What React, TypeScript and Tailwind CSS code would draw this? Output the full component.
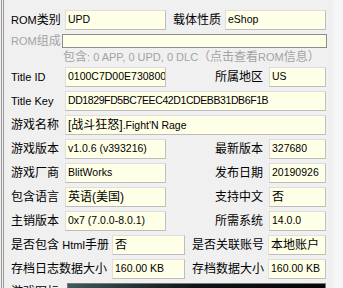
import type { ReactNode } from 'react';

const font = "font-['Liberation_Sans','Noto_Sans_CJK_SC',sans-serif]";

function Field({ value, className = '' }: { value?: ReactNode; className?: string }) {
  return (
    <div
      className={`h-5 shrink-0 flex items-center pl-[2px] bg-[#ffffe7] border border-[#dedede] border-r-[#bdbdbd] border-b-[#bdbdbd] text-[10.5px] text-black whitespace-nowrap overflow-hidden ${className}`}
    >
      {value}
    </div>
  );
}

function Label({ children, className = 'text-black' }: { children: ReactNode; className?: string }) {
  return <div className={`shrink-0 text-[12px] whitespace-nowrap ${className}`}>{children}</div>;
}

const L = ({ children }: { children: ReactNode }) => <span className="text-[11px]">{children}</span>;

function PairRow({ l1, v1, l2, v2 }: { l1: ReactNode; v1: ReactNode; l2: ReactNode; v2: ReactNode }) {
  return (
    <div className="flex items-center h-5">
      <Label className="w-[54px] text-black">{l1}</Label>
      <Field value={v1} className="w-[101px]" />
      <Label className="w-[54px] ml-[49px] text-black">{l2}</Label>
      <Field value={v2} className="w-[57px]" />
    </div>
  );
}

function WideRow({ label, value }: { label: ReactNode; value: ReactNode }) {
  return (
    <div className="flex items-center h-5">
      <Label className="w-[54px] text-black">{label}</Label>
      <Field value={value} className="w-[261px]" />
    </div>
  );
}

function SmallRow({ l1, v1, l2, v2 }: { l1: ReactNode; v1: ReactNode; l2: ReactNode; v2: ReactNode }) {
  return (
    <div className="flex items-center h-5">
      <Label className="w-[101px] text-black">{l1}</Label>
      <Field value={v1} className="w-[73px]" />
      <Label className="w-[76px] ml-[7px] text-black">{l2}</Label>
      <Field value={v2} className="w-[58px]" />
    </div>
  );
}

export default function App() {
  return (
    <div className={`w-[343px] h-[288px] overflow-hidden flex bg-[#f0f0f0] ${font}`}>
      <div className="ml-[1px] border-l-[3px] border-double border-[#9a9a9a] flex-1 pl-[7px] pt-[10px] flex flex-col">
        <div className="flex items-center h-5">
          <Label className="w-[54px] text-black"><L>ROM</L>类别</Label>
          <Field value="UPD" className="w-[101px]" />
          <Label className="w-[52px] ml-[7px] text-black">载体性质</Label>
          <Field value="eShop" className="w-[101px]" />
        </div>

        <div className="flex items-center h-[14px] mt-1">
          <Label className="w-[51px] text-[#a3a3a3]"><L>ROM</L>组成</Label>
          <div className="w-[265px] h-[14px] bg-[#ffffe7] border border-[#8c8c8c]" />
        </div>
        <div className="h-4 mt-[1px] pl-[52px] flex items-center text-[12px] text-[#a3a3a3] whitespace-nowrap">
          包含<L>: 0 APP, 0 UPD, 0 DLC</L>（点击查看<L>ROM</L>信息）
        </div>

        <div className="flex flex-col gap-1 mt-[2px]">
          <PairRow l1={<L>Title ID</L>} v1="0100C7D00E730800" l2="所属地区" v2="US" />
          <WideRow label={<L>Title Key</L>} value={<span className="tracking-[-0.4px]">DD1829FD5BC7EEC42D1CDEBB31DB6F1B</span>} />
          <WideRow label="游戏名称" value={<span><span className="text-[12px]">[战斗狂怒]</span>.Fight'N Rage</span>} />
          <PairRow l1="游戏版本" v1="v1.0.6 (v393216)" l2="最新版本" v2="327680" />
          <PairRow l1="游戏厂商" v1="BlitWorks" l2="发布日期" v2="20190926" />
          <PairRow l1="包含语言" v1={<span className="text-[12px]">英语(美国)</span>} l2="支持中文" v2={<span className="text-[12px]">否</span>} />
          <PairRow l1="主销版本" v1="0x7 (7.0.0-8.0.1)" l2="所需系统" v2="14.0.0" />
          <SmallRow l1={<span>是否包含 <L>Html</L>手册</span>} v1={<span className="text-[12px]">否</span>} l2="是否关联账号" v2={<span className="text-[12px]">本地账户</span>} />
          <SmallRow l1="存档日志数据大小" v1="160.00 KB" l2="存档数据大小" v2="160.00 KB" />
          <div className="flex items-start">
            <Label className="w-[56px] leading-[12px] pt-[3px] text-black">游戏图标</Label>
            <div className="w-[259px] h-10 border border-[#7a7a7a] bg-gradient-to-r from-[#3c5a5c] via-[#0d1416] to-[#050505]" />
          </div>
        </div>
      </div>
      <div className="w-[10px] bg-[#f6f6f6]" />
    </div>
  );
}
